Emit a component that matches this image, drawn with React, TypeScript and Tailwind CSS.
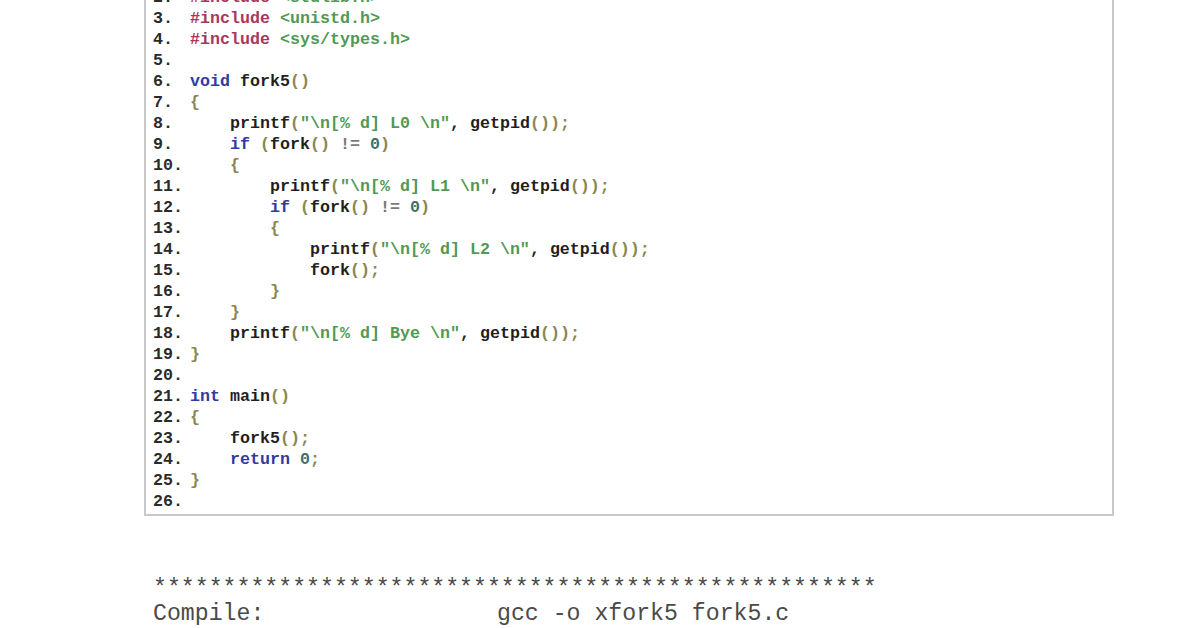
type Tok = [string, string];

const c = {
  num: "text-[#2a2a2a]",
  pp: "text-[#a8375e]",
  inc: "text-[#4f9a55]",
  kw: "text-[#2f3c9e]",
  fn: "text-[#1f1f1f]",
  br: "text-[#8a8650]",
  str: "text-[#4f9a55]",
  op: "text-[#7a7a7a]",
  lit: "text-[#3f7070]",
};

const call = (indent: string, label: string): Tok[] => [
  [indent, ""],
  ["printf", c.fn],
  ["(", c.br],
  ['"\\n[% d] ' + label + ' \\n"', c.str],
  [", ", c.fn],
  ["getpid", c.fn],
  ["());", c.br],
];

const lines: Tok[][] = [
  [["#include ", c.pp], ["<stdio.h>", c.inc]],
  [["#include ", c.pp], ["<stdlib.h>", c.inc]],
  [["#include ", c.pp], ["<unistd.h>", c.inc]],
  [["#include ", c.pp], ["<sys/types.h>", c.inc]],
  [],
  [["void", c.kw], [" fork5", c.fn], ["()", c.br]],
  [["{", c.br]],
  call("    ", "L0"),
  [["    ", ""], ["if", c.kw], [" (", c.br], ["fork", c.fn], ["()", c.br], [" != ", c.op], ["0", c.lit], [")", c.br]],
  [["    {", c.br]],
  call("        ", "L1"),
  [["        ", ""], ["if", c.kw], [" (", c.br], ["fork", c.fn], ["()", c.br], [" != ", c.op], ["0", c.lit], [")", c.br]],
  [["        {", c.br]],
  call("            ", "L2"),
  [["            ", ""], ["fork", c.fn], ["();", c.br]],
  [["        }", c.br]],
  [["    }", c.br]],
  call("    ", "Bye"),
  [["}", c.br]],
  [],
  [["int", c.kw], [" main", c.fn], ["()", c.br]],
  [["{", c.br]],
  [["    ", ""], ["fork5", c.fn], ["();", c.br]],
  [["    ", ""], ["return", c.kw], [" ", ""], ["0", c.lit], [";", c.br]],
  [["}", c.br]],
  [],
];

const mono = { fontFamily: '"Liberation Mono", "DejaVu Sans Mono", monospace' };

export default function App() {
  return (
    <div className="w-[1196px] h-[628px] overflow-hidden bg-white">
      <div className="pl-[144px] -mt-[44px]">
        <div className="w-[970px] border-2 border-[#c9c9c9] pt-[8px] pb-[2px] pl-[7px] bg-white">
          {lines.map((toks, i) => (
            <div
              key={i}
              className="flex h-[21px] leading-[21px] font-bold text-[16.67px] whitespace-pre"
              style={mono}
            >
              <span className={"w-[37px] shrink-0 " + c.num}>{i + 1}.</span>
              <span>
                {toks.map(([t, cls], j) => (
                  <span key={j} className={cls}>
                    {t}
                  </span>
                ))}
              </span>
            </div>
          ))}
        </div>
        <div
          className="mt-[55px] pl-[9px] text-[23.2px] text-[#4a4a4a] whitespace-pre"
          style={mono}
        >
          <div className="h-[29px] pt-[8px] leading-[21px]">{"*".repeat(52)}</div>
          <div className="flex leading-[29px]">
            <span className="w-[344px] shrink-0">Compile:</span>
            <span>gcc -o xfork5 fork5.c</span>
          </div>
        </div>
      </div>
    </div>
  );
}
